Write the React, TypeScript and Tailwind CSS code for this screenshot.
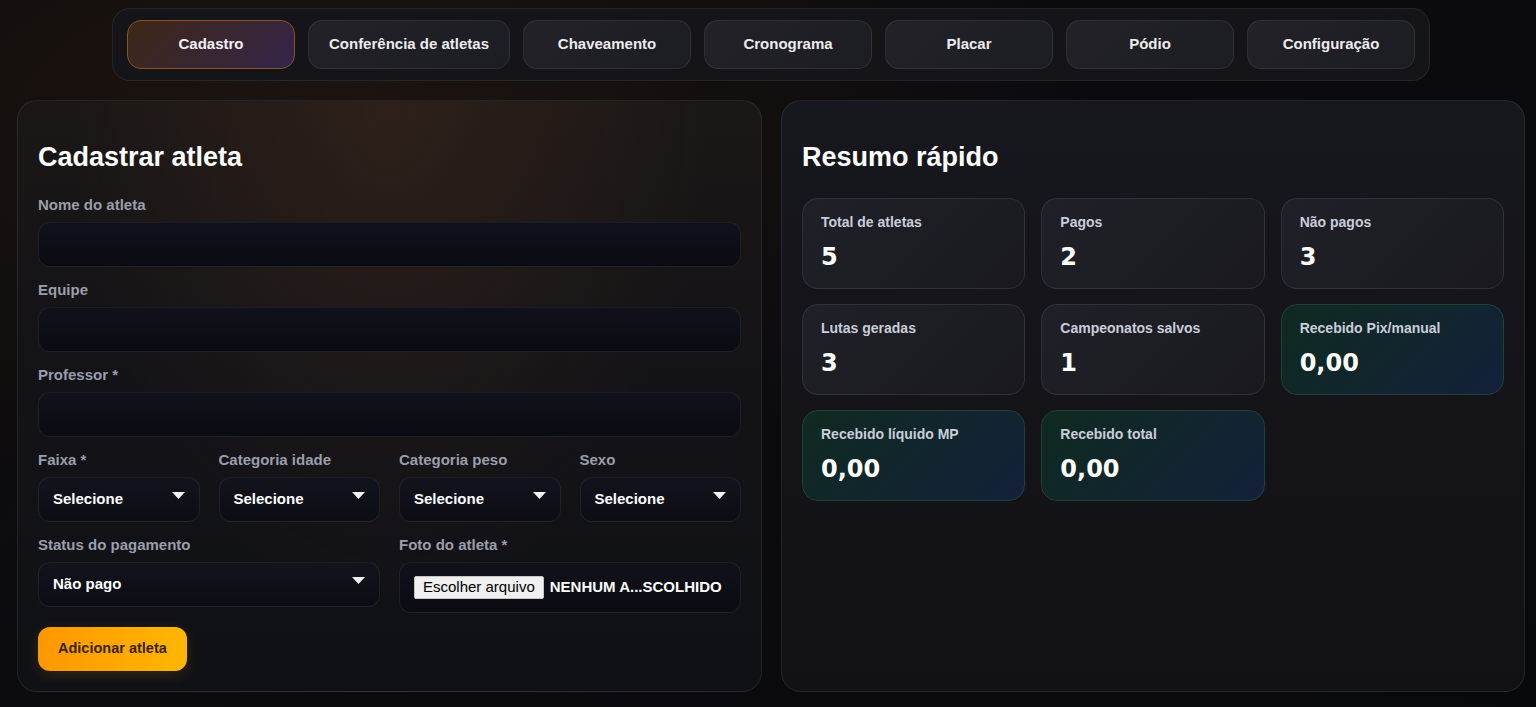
import { useState } from 'react'

/* ─── Data ─────────────────────────────────────────────────── */
const tabs = ['Cadastro', 'Conferência de atletas', 'Chaveamento', 'Cronograma', 'Placar', 'Pódio', 'Configuração']

type Stat = { label: string; value: string; money?: boolean }

const stats: Stat[] = [
  { label: 'Total de atletas', value: '5' },
  { label: 'Pagos', value: '2' },
  { label: 'Não pagos', value: '3' },
  { label: 'Lutas geradas', value: '3' },
  { label: 'Campeonatos salvos', value: '1' },
  { label: 'Recebido Pix/manual', value: '0,00', money: true },
  { label: 'Recebido líquido MP', value: '0,00', money: true },
  { label: 'Recebido total', value: '0,00', money: true },
]

/* ─── Small pieces ─────────────────────────────────────────── */
function Label({ children }: { children: React.ReactNode }) {
  return <div className="mb-2 text-[15px] leading-[18px] font-bold text-[#9a9eab]">{children}</div>
}

function TextInput() {
  return (
    <input
      className="block h-[45px] w-full rounded-[12px] border border-white/[0.07] bg-[linear-gradient(180deg,#10111a,#0b0c12)] px-[14px] text-[15px] text-white outline-none"
    />
  )
}

function Select({ value = 'Selecione' }: { value?: string }) {
  return (
    <div className="flex h-[45px] w-full items-center justify-between rounded-[12px] border border-white/[0.07] bg-[linear-gradient(180deg,#12131c,#0c0d14)] pl-[14px] pr-[14px]">
      <span className="text-[15px] font-bold text-white">{value}</span>
      <svg width="13" height="7" viewBox="0 0 13 7" className="-mt-[9px]">
        <path d="M0 0 H13 L6.5 7 Z" fill="#f2f2f2" />
      </svg>
    </div>
  )
}

function Field({ label, children }: { label: string; children: React.ReactNode }) {
  return (
    <div className="mb-[14px]">
      <Label>{label}</Label>
      {children}
    </div>
  )
}

function StatCard({ s }: { s: Stat }) {
  return (
    <div
      className={
        s.money
          ? 'h-[91px] rounded-[16px] border border-[#1f4236] bg-[linear-gradient(135deg,#0f2a20,#13213a)] px-[18px] pt-[15px]'
          : 'h-[91px] rounded-[16px] border border-white/[0.09] bg-[linear-gradient(135deg,#202028,#19191f)] px-[18px] pt-[15px]'
      }
    >
      <div className="text-[14px] leading-[16px] font-bold text-[#c9cedb]">{s.label}</div>
      <div className="mt-[13px] font-['DejaVu_Sans',sans-serif] text-[24px] leading-[28px] font-bold text-white">
        {s.value}
      </div>
    </div>
  )
}

/* ─── Page ─────────────────────────────────────────────────── */
export default function App() {
  const [active, setActive] = useState('Cadastro')

  return (
    <div className="min-h-screen bg-[radial-gradient(ellipse_at_22%_18%,rgba(95,55,25,0.2),transparent_45%),linear-gradient(135deg,#0e0c0c,#0a0a0f_60%,#08090d)] pl-[17px] pr-[11px] pt-[8px] pb-[17px] font-['Liberation_Sans',Arial,sans-serif]">
      {/* Tabs */}
      <nav className="mx-auto flex w-fit gap-[13px] rounded-[18px] border border-white/[0.07] bg-[#15151b]/90 px-[14px] py-[11px]">
        {tabs.map(t => (
          <button
            key={t}
            onClick={() => setActive(t)}
            className={
              t === active
                ? 'h-[49px] min-w-[168px] rounded-[14px] border border-[#8a5326] bg-[linear-gradient(135deg,#3d2716,#35254a)] px-[20px] text-[15px] font-bold text-[#f1f1f1]'
                : 'h-[49px] min-w-[168px] rounded-[14px] border border-white/[0.08] bg-[linear-gradient(135deg,#222228,#1c1c23)] px-[20px] text-[15px] font-bold text-[#ececec]'
            }
          >
            {t}
          </button>
        ))}
      </nav>

      <div className="mt-[19px] grid grid-cols-[745px_744px] gap-[19px]">
        {/* Cadastro */}
        <section className="rounded-[20px] border border-white/[0.08] bg-[radial-gradient(ellipse_at_50%_0%,rgba(80,50,30,0.35),transparent_60%),linear-gradient(180deg,#1b1716,#121217_55%,#101116)] px-5 pt-[40px] pb-5">
          <h2 className="text-[27px] leading-[32px] font-bold text-white">Cadastrar atleta</h2>

          <div className="mt-[23px]">
            <Field label="Nome do atleta"><TextInput /></Field>
            <Field label="Equipe"><TextInput /></Field>
            <Field label="Professor *"><TextInput /></Field>

            <div className="grid grid-cols-4 gap-x-[19px]">
              <Field label="Faixa *"><Select /></Field>
              <Field label="Categoria idade"><Select /></Field>
              <Field label="Categoria peso"><Select /></Field>
              <Field label="Sexo"><Select /></Field>
            </div>

            <div className="grid grid-cols-2 gap-x-[19px]">
              <Field label="Status do pagamento"><Select value="Não pago" /></Field>
              <Field label="Foto do atleta *">
                <div className="flex h-[51px] items-center rounded-[12px] border border-white/[0.07] bg-[linear-gradient(180deg,#10111a,#0b0c12)] px-[14px]">
                  <span className="flex h-[23px] items-center rounded-[2px] border border-[#c4c4c4] bg-[#efefef] px-[8px] text-[15px] text-black">
                    Escolher arquivo
                  </span>
                  <span className="ml-[6px] text-[15px] font-bold text-white">NENHUM A...SCOLHIDO</span>
                </div>
              </Field>
            </div>
          </div>

          <button className="h-[44px] rounded-[12px] bg-[linear-gradient(90deg,#ff9700,#ffb700)] px-[20px] text-[14.5px] font-bold text-[#3b2205] shadow-[0_4px_14px_rgba(255,150,0,0.15)]">
            Adicionar atleta
          </button>
        </section>

        {/* Resumo */}
        <section className="rounded-[20px] border border-white/[0.08] bg-[linear-gradient(180deg,#17171e,#131318_60%,#111116)] px-5 pt-[40px] pb-5">
          <h2 className="text-[27px] leading-[32px] font-bold text-white">Resumo rápido</h2>
          <div className="mt-[25px] grid grid-cols-3 gap-x-[16px] gap-y-[15px]">
            {stats.map(s => <StatCard key={s.label} s={s} />)}
          </div>
        </section>
      </div>
    </div>
  )
}
